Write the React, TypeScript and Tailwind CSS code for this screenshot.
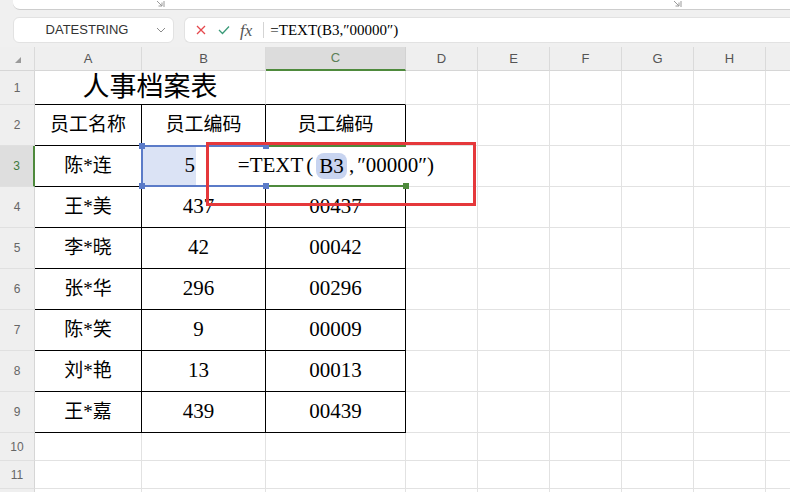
import React from "react";

const COLS = ["A", "B", "C", "D", "E", "F", "G", "H", ""];

const data: Record<number, string[]> = {
  2: ["员工名称", "员工编码", "员工编码"],
  3: ["陈*连", "", ""],
  4: ["王*美", "437", "00437"],
  5: ["李*晓", "42", "00042"],
  6: ["张*华", "296", "00296"],
  7: ["陈*笑", "9", "00009"],
  8: ["刘*艳", "13", "00013"],
  9: ["王*嘉", "439", "00439"],
};

const ROWS = [1, 2, 3, 4, 5, 6, 7, 8, 9, 10, 11, 12];

function Launcher() {
  return (
    <svg width="9" height="8" viewBox="0 0 9 8">
      <path d="M1 1L6 6M6 2.5V6H2.5" stroke="#9a9a9a" strokeWidth="1" fill="none" />
      <path d="M8 1V7" stroke="#9a9a9a" strokeWidth="1" />
    </svg>
  );
}

function cellText(c: number, v: string) {
  if (!v) return null;
  const isNum = /^[0-9]+$/.test(v);
  if (isNum && c === 1) {
    return <span className="pr-[10px] text-[21px]">{v}</span>;
  }
  return <span className={isNum ? "text-[21px]" : "text-[19px]"}>{v}</span>;
}

export default function App() {
  const cells: React.ReactNode[] = [];

  // column headers
  cells.push(
    <div
      key="corner"
      className="flex items-end pl-[15px] pb-[7px] bg-[#efefef] border-r border-r-[#dadada] border-b border-b-[#d6d6d6]"
    >
      <svg width="6" height="6" viewBox="0 0 6 6">
        <path d="M6 0V6H0Z" fill="#9a9a9a" />
      </svg>
    </div>
  );
  COLS.forEach((c, i) => {
    const active = c === "C";
    cells.push(
      <div
        key={"h" + i}
        className={
          active
            ? "flex items-center justify-center bg-[#dcdcdc] border-r border-r-[#d2d2d2] border-b-2 border-b-[#4e8a3c] text-[13px] text-[#5b7f56]"
            : "flex items-center justify-center bg-[#efefef] border-r border-r-[#dadada] border-b border-b-[#d6d6d6] text-[13px] text-[#555]"
        }
      >
        {c}
      </div>
    );
  });

  ROWS.forEach((r) => {
    const activeRow = r === 3;
    cells.push(
      <div
        key={"r" + r}
        className={
          activeRow
            ? "flex items-center justify-center bg-[#dedede] border-r-2 border-r-[#4e8a3c] border-b border-b-[#e0e0e0] text-[12px] text-[#3f7a40]"
            : "flex items-center justify-center bg-[#efefef] border-r border-r-[#d6d6d6] border-b border-b-[#e0e0e0] text-[12px] text-[#666]"
        }
      >
        {r < 12 ? r : null}
      </div>
    );
    COLS.forEach((_, c) => {
      if (r === 1 && c === 1) return;
      if (r === 1 && c === 0) {
        cells.push(
          <div
            key="title"
            className="col-span-2 flex items-center justify-center bg-white border-r border-r-[#e2e2e2] border-b border-b-black text-[27px] font-['Liberation_Serif','Noto_Sans_CJK_SC',serif] text-black"
          >
            人事档案表
          </div>
        );
        return;
      }
      const inTable = r >= 2 && r <= 9 && c <= 2;
      const blackBottom = r >= 1 && r <= 9 && c <= 2;
      const v = data[r]?.[c] ?? "";
      cells.push(
        <div
          key={r + "-" + c}
          className={[
            "flex items-center justify-center bg-white text-black font-['Liberation_Serif','Noto_Sans_CJK_SC',serif] border-r border-b",
            inTable ? "border-r-black" : "border-r-[#e2e2e2]",
            blackBottom ? "border-b-black" : "border-b-[#e2e2e2]",
          ].join(" ")}
        >
          {cellText(c, v)}
        </div>
      );
    });
  });

  return (
    <div className="w-[790px] h-[492px] overflow-hidden bg-[#f0f0f0] font-['Liberation_Sans',sans-serif]">
      {/* ribbon bottom edge */}
      <div className="h-[10px] pl-[13px]">
        <div className="flex h-[10px] items-start bg-white rounded-bl-[7px] border-b border-[#cdcdcd]">
          <div className="ml-[143px]">
            <Launcher />
          </div>
          <div className="ml-[508px]">
            <Launcher />
          </div>
        </div>
      </div>

      {/* name box + formula bar */}
      <div className="mt-[7px] flex h-[26px] pl-[13px] gap-[10px]">
        <div className="flex w-[161px] items-center rounded-[6px] border border-[#e2e2e2] bg-white">
          <span className="flex-1 pl-[4px] text-center text-[13px] text-[#333]">DATESTRING</span>
          <svg className="mr-[7px]" width="10" height="6" viewBox="0 0 10 6">
            <path d="M1 1L5 5L9 1" stroke="#8a8a8a" strokeWidth="1" fill="none" />
          </svg>
        </div>
        <div className="flex flex-1 items-center rounded-l-[6px] border border-r-0 border-[#e2e2e2] bg-white">
          <svg className="ml-[11px]" width="10" height="10" viewBox="0 0 10 10">
            <path d="M1 1L9 9M9 1L1 9" stroke="#e5484d" strokeWidth="1.3" />
          </svg>
          <svg className="ml-[12px]" width="12" height="10" viewBox="0 0 12 10">
            <path d="M1 5L4.5 8.5L11 1.5" stroke="#3a9a78" strokeWidth="1.3" fill="none" />
          </svg>
          <span className="ml-[10px] font-['Liberation_Serif',serif] text-[17px] italic text-[#555] leading-none">
            fx
          </span>
          <div className="ml-[11px] h-[16px] w-px bg-[#d4d4d4]" />
          <span className="ml-[6px] font-['Liberation_Serif','Noto_Sans_CJK_SC',serif] text-[15px] text-black">
            =TEXT(B3,″00000″)
          </span>
        </div>
      </div>

      {/* sheet */}
      <div className="relative mt-[4px] w-[838px]">
        <div className="grid grid-cols-[35px_107px_124px_140px_72px_72px_72px_72px_72px_72px] grid-rows-[24px_34px_repeat(8,41px)_28px_28px_28px]">
          {cells}
        </div>

        {/* B3 reference highlight */}
        <div className="absolute left-[141px] top-[98px] flex h-[42px] w-[125px] items-center justify-end border-2 border-[#5b7bc8] bg-[#dbe3f5] pr-[69px] font-['Liberation_Serif',serif] text-[21px] text-black">
          5
        </div>

        {/* in-cell editor */}
        <div className="absolute left-[196px] top-[100px] h-[38px] w-[210px] bg-white" />
        <div className="absolute left-[266px] top-[98px] h-[2px] w-[140px] bg-[#4e8a3c]" />
        <div className="absolute left-[266px] top-[138px] h-[2px] w-[140px] bg-[#4e8a3c]" />
        <div className="absolute left-[403px] top-[136px] h-[6px] w-[6px] bg-[#4e8a3c]" />
        <div className="absolute left-[139px] top-[96px] h-[6px] w-[6px] bg-[#5b7bc8]" />
        <div className="absolute left-[263px] top-[96px] h-[6px] w-[6px] bg-[#5b7bc8]" />
        <div className="absolute left-[139px] top-[136px] h-[6px] w-[6px] bg-[#5b7bc8]" />
        <div className="absolute left-[263px] top-[136px] h-[6px] w-[6px] bg-[#5b7bc8]" />

        <div className="absolute left-[196px] top-[99px] h-[40px] w-[280px] flex items-center justify-center font-['Liberation_Serif','Noto_Sans_CJK_SC',serif] text-[21px] text-black">
          <span>=TEXT</span>
          <span className="ml-[3px]">(</span>
          <span className="ml-[3px] rounded-[8px] bg-[#c8d4f0] px-[3px] leading-[26px]">B3</span>
          <span className="ml-[2px]">,</span>
          <span className="ml-[3px]">″00000″)</span>
        </div>

        {/* annotation */}
        <div className="absolute left-[206px] top-[95px] h-[64px] w-[270px] border-[3px] border-[#e5383b]" />
      </div>
    </div>
  );
}
